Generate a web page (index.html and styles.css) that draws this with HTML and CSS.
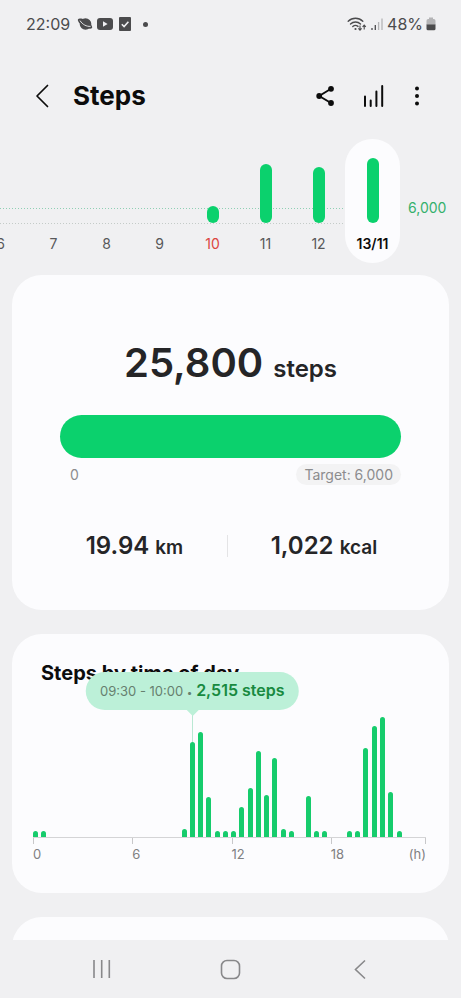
FILE: index.html
```html
<!DOCTYPE html>
<html lang="en">
<head>
<meta charset="utf-8">
<meta name="viewport" content="width=device-width, initial-scale=1">
<title>Steps</title>
<link rel="stylesheet" href="styles.css">
</head>
<body>
<div class="status">
  <div class="status-group">
    <span class="clock">22:09</span>
    <svg width="16" height="16" viewBox="0 0 16 16" aria-hidden="true"><circle cx="8.500" cy="8" r="5.800" fill="#4b4b4d"/><ellipse cx="8" cy="7.600" rx="8.200" ry="3.200" transform="rotate(32 8 7.600)" fill="#4b4b4d"/><path d="M3 4.600C5.500 8.600 9.500 10.600 13.600 10.400" fill="none" stroke="#f0f0f2" stroke-width=".9"/></svg>
    <svg width="18" height="14" viewBox="0 0 18 14" aria-hidden="true"><rect x="1" y="1" width="16" height="12" rx="3" fill="#4b4b4d"/><path d="M7 4.300v5.400L11.600 7z" fill="#f0f0f2"/></svg>
    <svg class="check" width="12" height="14" viewBox="0 0 12 14" aria-hidden="true"><rect width="12" height="14" rx="1" fill="#4b4b4d"/><path d="M2.800 7.200l2.300 2.300L9.400 4.800" fill="none" stroke="#f0f0f2" stroke-width="1.600"/></svg>
    <span class="status-dot"></span>
  </div>
  <div class="status-group status-right">
    <svg width="20" height="16" viewBox="0 0 20 16" aria-hidden="true"><g fill="none" stroke="#4b4b4d" stroke-width="1.400" stroke-linecap="round"><path d="M1.200 5.200a10.500 10.500 0 0 1 14.600 0M3.500 8a7.300 7.300 0 0 1 10 0M5.800 10.600a4 4 0 0 1 5.200-.2"/></g><circle cx="8.500" cy="13" r="1.100" fill="#4b4b4d"/><path d="M13 9.500v4.500m-1.600-1.600L13 14.200l1.600-1.800M17.200 13.600V9.200m-1.600 1.700l1.600-1.800 1.600 1.800" fill="none" stroke="#4b4b4d" stroke-width="1.100"/></svg>
    <svg width="14" height="14" viewBox="0 0 14 14" aria-hidden="true"><path d="M2 11v2M5.300 8v5" stroke="#4b4b4d" stroke-width="1.300"/><path d="M8.600 5v8M12 1.500V13" stroke="#b4b4b6" stroke-width="1.300"/></svg>
    <span class="battery-text">48%</span>
    <svg width="10" height="14" viewBox="0 0 10 14" aria-hidden="true"><path d="M3 .5h4V2h.8Q9.500 2 9.500 3.700V8h-9V3.700Q.5 2 2.200 2H3z" fill="#b4b4b6"/><path d="M.5 7.500h9v4.200q0 1.500-1.500 1.500H2q-1.500 0-1.500-1.500z" fill="#4b4b4d"/></svg>
  </div>
</div>

<header class="header">
  <button class="icon-btn" aria-label="Back"><svg width="24" height="24" viewBox="0 0 24 24"><path d="M17.500 1.500L7 12l10.500 10.500" fill="none" stroke="#0c0c0c" stroke-width="1.700" stroke-linecap="round" stroke-linejoin="round"/></svg></button>
  <h1>Steps</h1>
  <div class="actions">
    <button class="icon-btn" aria-label="Share"><svg width="24" height="24" viewBox="0 0 24 24"><path d="M18 4.800L6.200 12 18 19" fill="none" stroke="#0c0c0c" stroke-width="1.900"/><g fill="#0c0c0c"><circle cx="18" cy="4.800" r="2.900"/><circle cx="6.200" cy="12" r="2.900"/><circle cx="18" cy="19" r="2.900"/></g></svg></button>
    <button class="icon-btn" aria-label="Trends"><svg width="24" height="24" viewBox="0 0 24 24"><path d="M4 12.500v9.500M9.700 16.500v5.500M15.400 7.500v14.500M21.200 2v20" fill="none" stroke="#0c0c0c" stroke-width="2" stroke-linecap="round"/></svg></button>
    <button class="icon-btn more" aria-label="More options"><svg width="24" height="24" viewBox="0 0 24 24" fill="#0c0c0c"><circle cx="12" cy="4.500" r="2"/><circle cx="12" cy="12" r="2"/><circle cx="12" cy="19.500" r="2"/></svg></button>
  </div>
</header>

<main class="content">
  <section class="week" aria-label="Daily steps">
    <ol class="days">
      <li><i></i><span>6</span></li>
      <li><i></i><span>7</span></li>
      <li><i></i><span>8</span></li>
      <li><i></i><span>9</span></li>
      <li class="sunday"><i style="height:17px"></i><span>10</span></li>
      <li><i style="height:59px"></i><span>11</span></li>
      <li><i style="height:56px"></i><span>12</span></li>
      <li class="selected"><i style="height:65px"></i><span>13/11</span></li>
    </ol>
    <span class="goal">6,000</span>
  </section>

  <section class="card summary">
    <p class="total">25,800 <small>steps</small></p>
    <div class="progress"></div>
    <div class="range"><span>0</span><span class="target">Target: 6,000</span></div>
    <div class="stats">
      <p>19.94 <small>km</small></p>
      <p>1,022 <small>kcal</small></p>
    </div>
  </section>

  <section class="card hourly">
    <h2>Steps by time of day</h2>
    <ol class="plot">
      <li style="height:6px"></li><li style="height:6px"></li><li></li><li></li><li></li><li></li>
      <li></li><li></li><li></li><li></li><li></li><li></li>
      <li></li><li></li><li></li><li></li><li></li><li></li>
      <li style="height:8px"></li>
      <li class="active" style="height:95px"><div class="tip">09:30 - 10:00 <small>•</small> <b>2,515 steps</b></div></li>
      <li style="height:105px"></li><li style="height:40px"></li><li style="height:6px"></li><li style="height:6px"></li>
      <li style="height:6px"></li><li style="height:30px"></li><li style="height:49px"></li><li style="height:86px"></li><li style="height:42px"></li><li style="height:79px"></li>
      <li style="height:8px"></li><li style="height:6px"></li><li></li><li style="height:41px"></li><li style="height:6px"></li><li style="height:6px"></li>
      <li></li><li></li><li style="height:6px"></li><li style="height:6px"></li><li style="height:89px"></li><li style="height:111px"></li>
      <li style="height:120px"></li><li style="height:45px"></li><li style="height:6px"></li><li></li><li></li><li></li>
    </ol>
    <div class="axis"><span>0</span><span>6</span><span>12</span><span>18</span><span class="unit">(h)</span></div>
  </section>

  <section class="card next"></section>
</main>

<nav class="navbar" aria-label="System">
  <button class="icon-btn" aria-label="Recent apps"><svg width="24" height="24" viewBox="0 0 24 24"><path d="M4 3v18M11.700 3v18M19.300 3v18" stroke="#88888a" stroke-width="1.600"/></svg></button>
  <button class="icon-btn" aria-label="Home"><svg width="24" height="24" viewBox="0 0 24 24"><rect x="2.500" y="3.500" width="18" height="18" rx="5.500" fill="none" stroke="#88888a" stroke-width="1.600"/></svg></button>
  <button class="icon-btn" aria-label="Back"><svg width="24" height="24" viewBox="0 0 24 24"><path d="M17 3.500L7.500 12.500l9.500 9" fill="none" stroke="#88888a" stroke-width="1.600"/></svg></button>
</nav>
</body>
</html>
```
FILE: styles.css
```css
* { box-sizing: border-box; margin: 0; padding: 0; }

body {
  height: 100vh;
  display: flex;
  flex-direction: column;
  background: #f0f0f2;
  color: #252527;
  font-family: Inter, "Liberation Sans", sans-serif;
  font-size: 14px;
}

ol { list-style: none; }
svg { display: block; flex: none; }
small { line-height: 1; }

.icon-btn {
  width: 24px;
  height: 24px;
  border: 0;
  background: none;
}

.status {
  flex: none;
  height: 48px;
  padding: 0 25px 0 26px;
  display: flex;
  align-items: center;
  justify-content: space-between;
  color: #4b4b4d;
  font-size: 16px;
}
.status-group { display: flex; align-items: center; gap: 3px; }
.clock { margin-right: 4px; }
.check { margin-left: 2px; }
.status-dot {
  width: 5px;
  height: 5px;
  margin-left: 9px;
  border-radius: 50%;
  background: #4b4b4d;
}

.header {
  flex: none;
  padding: 28px 32px 23px 30px;
  display: flex;
  align-items: center;
  gap: 19px;
  color: #0c0c0c;
}
.header h1 { font-size: 26px; line-height: 40px; font-weight: 700; }
.actions { margin-left: auto; display: flex; gap: 24px; }
.more { margin-left: -4px; }

.content {
  flex: 1;
  min-height: 0;
  overflow-y: auto;
  scrollbar-width: none;
  display: flex;
  flex-direction: column;
  gap: 24px;
}

.week {
  flex: none;
  display: flex;
  margin-bottom: -12px;
}
.days {
  position: relative;
  flex: 1;
  min-width: 0;
  overflow: hidden;
  display: flex;
  justify-content: flex-end;
}
.days::before {
  content: "";
  position: absolute;
  top: 69px;
  left: 0;
  right: 56px;
  height: 16px;
  background:
    repeating-linear-gradient(90deg, #8fd0b4 0 1px, transparent 1px 3px) top / 100% 1px no-repeat,
    repeating-linear-gradient(90deg, #c4cbc8 0 1px, transparent 1px 3px) bottom / 100% 1px no-repeat;
}
.days li {
  position: relative;
  flex: none;
  width: 53px;
  height: 124px;
  padding-bottom: 9px;
  display: flex;
  flex-direction: column;
  align-items: center;
  justify-content: flex-end;
  gap: 11px;
  color: #58585a;
}
.days i { width: 12px; border-radius: 6px; background: #0bd16d; }
.days span { line-height: 20px; }
.days .sunday { color: #dc4640; }
.days .selected {
  width: 55px;
  border-radius: 28px;
  background: #fcfcfe;
  color: #0c0c0c;
  font-weight: 600;
}
.goal { width: 61px; padding: 59px 0 0 8px; line-height: 20px; color: #35b06c; }

.card {
  flex: none;
  margin: 0 12px;
  border-radius: 30px;
  background: #fcfcfe;
}

.summary { padding: 62px 48px 47px; }
.total {
  font-size: 40px;
  line-height: 52px;
  font-weight: 600;
  text-align: center;
}
.total small { font-size: 24px; }
.progress {
  height: 43px;
  margin-top: 26px;
  border-radius: 22px;
  background: #0bd16d;
}
.range {
  margin-top: 6px;
  padding-left: 10px;
  display: flex;
  justify-content: space-between;
  line-height: 21px;
  color: #8c8c8e;
}
.target { padding: 0 8px; border-radius: 11px; background: #f3f3f4; }
.stats {
  margin: 44px -20px 0 -18px;
  display: grid;
  grid-template-columns: 20fr 21fr;
  align-items: center;
  text-align: center;
  font-size: 24px;
  line-height: 34px;
  font-weight: 600;
}
.stats small { font-size: 19px; }
.stats p + p {
  background: linear-gradient(#e4e4e6, #e4e4e6) left / 1px 22px no-repeat;
}

.hourly { padding: 26px 20px 29px; }
.hourly h2 {
  padding-left: 9px;
  font-size: 20px;
  line-height: 26px;
  font-weight: 700;
  color: #0c0c0c;
}
.plot {
  height: 120px;
  margin: 31px 1px 0 -1px;
  display: grid;
  grid-template-columns: repeat(48, 1fr);
  align-items: end;
  justify-items: center;
}
.plot li {
  position: relative;
  width: 5px;
  border-radius: 3px 3px 0 0;
  background: #16cc6c;
}
.active::before {
  content: "";
  position: absolute;
  left: 2px;
  bottom: 100%;
  width: 1px;
  height: 32px;
  background: #b9e8d3;
}
.tip {
  position: absolute;
  left: 50%;
  bottom: calc(100% + 32px);
  transform: translateX(-50%);
  padding: 0 14px;
  border-radius: 19px;
  background: #bcf0d8;
  line-height: 38px;
  white-space: nowrap;
  font-size: 13px;
  color: #66806f;
}
.tip small { font-size: 10px; vertical-align: middle; }
.tip::after {
  content: "";
  position: absolute;
  top: 100%;
  left: 50%;
  margin-left: -6px;
  border: 6px solid transparent;
  border-top-color: #bcf0d8;
  border-bottom: 0;
}
.tip b { font-size: 16px; line-height: 1; font-weight: 600; color: #188a40; }

.axis {
  position: relative;
  margin: 0 3px 0 1px;
  border-top: 1px solid #d4d4d6;
  display: grid;
  grid-template-columns: 99fr 99fr 99fr 95fr;
  line-height: 20px;
  font-size: 13px;
  color: #808082;
}
.axis span {
  padding-top: 6px;
  background: linear-gradient(#c8c8ca, #c8c8ca) left top / 1px 6px no-repeat;
}
.axis .unit {
  position: absolute;
  right: 0;
  top: 0;
  background-position: right top;
}

.next { min-height: 120px; }

.navbar {
  flex: none;
  height: 58px;
  display: flex;
  align-items: center;
  justify-content: center;
  gap: 105px;
  background: #f0f0f2;
}
```
